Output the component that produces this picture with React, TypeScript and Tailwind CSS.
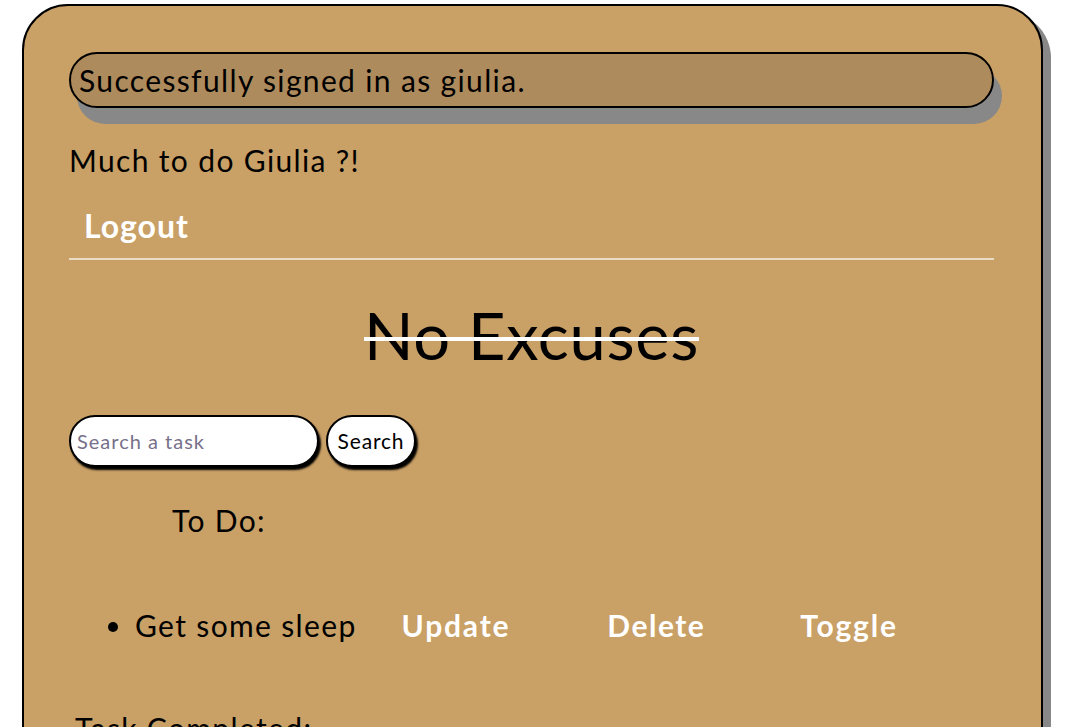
import {useState} from "react";

const font = "font-['Lato','Noto_Sans',sans-serif]";

export default function App() {
    const [query, setQuery] = useState<string>('')
    const tasks = ['Get some sleep']

    return (
        <div className={`min-h-[727px] bg-white pl-[22px] pt-[4px] overflow-hidden ${font}`}>
            <div
                className="w-[1021px] min-h-[800px] bg-[#c9a066] border-2 border-black rounded-t-[46px] shadow-[8px_8px_0_#888] pl-[45px] pr-[47px] pt-[46px] text-black">

                {/* Flash message */}
                <div
                    className="h-[56px] flex items-center px-[8px] rounded-full border-2 border-black bg-[#ae8b5c] shadow-[8px_16px_0_#888] text-[30px] tracking-[0.045em]">
                    Successfully signed in as giulia.
                </div>

                <p className="mt-[32px] leading-[40px] text-[30px] tracking-[0.045em]">Much to do Giulia ?!</p>

                {/* Nav */}
                <nav className="mt-[26px] pl-[15px] leading-[40px] text-[32px] font-bold tracking-[0.03em] text-white">
                    <a href="#">Logout</a>
                </nav>
                <div className="mt-[12px] h-[2px] bg-[#eadcc4]"/>

                <h1 className="mt-[35px] leading-[80px] text-[65px] tracking-[0.01em] text-center line-through decoration-white decoration-4">
                    No Excuses
                </h1>

                {/* Search */}
                <form className="mt-[40px] flex gap-[7px]" onSubmit={e => e.preventDefault()}>
                    <input value={query} onChange={e => setQuery(e.target.value)} placeholder="Search a task"
                           className="w-[250px] h-[52px] px-[6px] rounded-full bg-white border-2 border-black shadow-[2px_3px_2px_#000] text-[20px] tracking-[0.05em] placeholder:text-[#77708a] outline-none"/>
                    <button
                        className="w-[90px] h-[52px] rounded-full bg-white border-2 border-black shadow-[2px_3px_2px_#000] text-[21px] tracking-[0.04em]">
                        Search
                    </button>
                </form>

                <h2 className="mt-[33px] pl-[103px] leading-[40px] text-[30px] tracking-[0.045em]">To Do:</h2>

                <ul className="mt-[65px] list-disc pl-[66px]">
                    {tasks.map(task => (
                        <li key={task} className="leading-[40px] text-[30px]">
                            <div className="flex items-center">
                                <span className="tracking-[0.045em]">{task}</span>
                                <button className="ml-[45px] text-white font-bold tracking-[0.06em]">Update</button>
                                <button className="ml-[97px] text-white font-bold tracking-[0.05em]">Delete</button>
                                <button className="ml-[95px] text-white font-bold tracking-[0.06em]">Toggle</button>
                            </div>
                        </li>
                    ))}
                </ul>

                <h2 className="mt-[63px] pl-[6px] leading-[40px] text-[30px] tracking-[0.045em]">Task Completed:</h2>
            </div>
        </div>
    );
}
